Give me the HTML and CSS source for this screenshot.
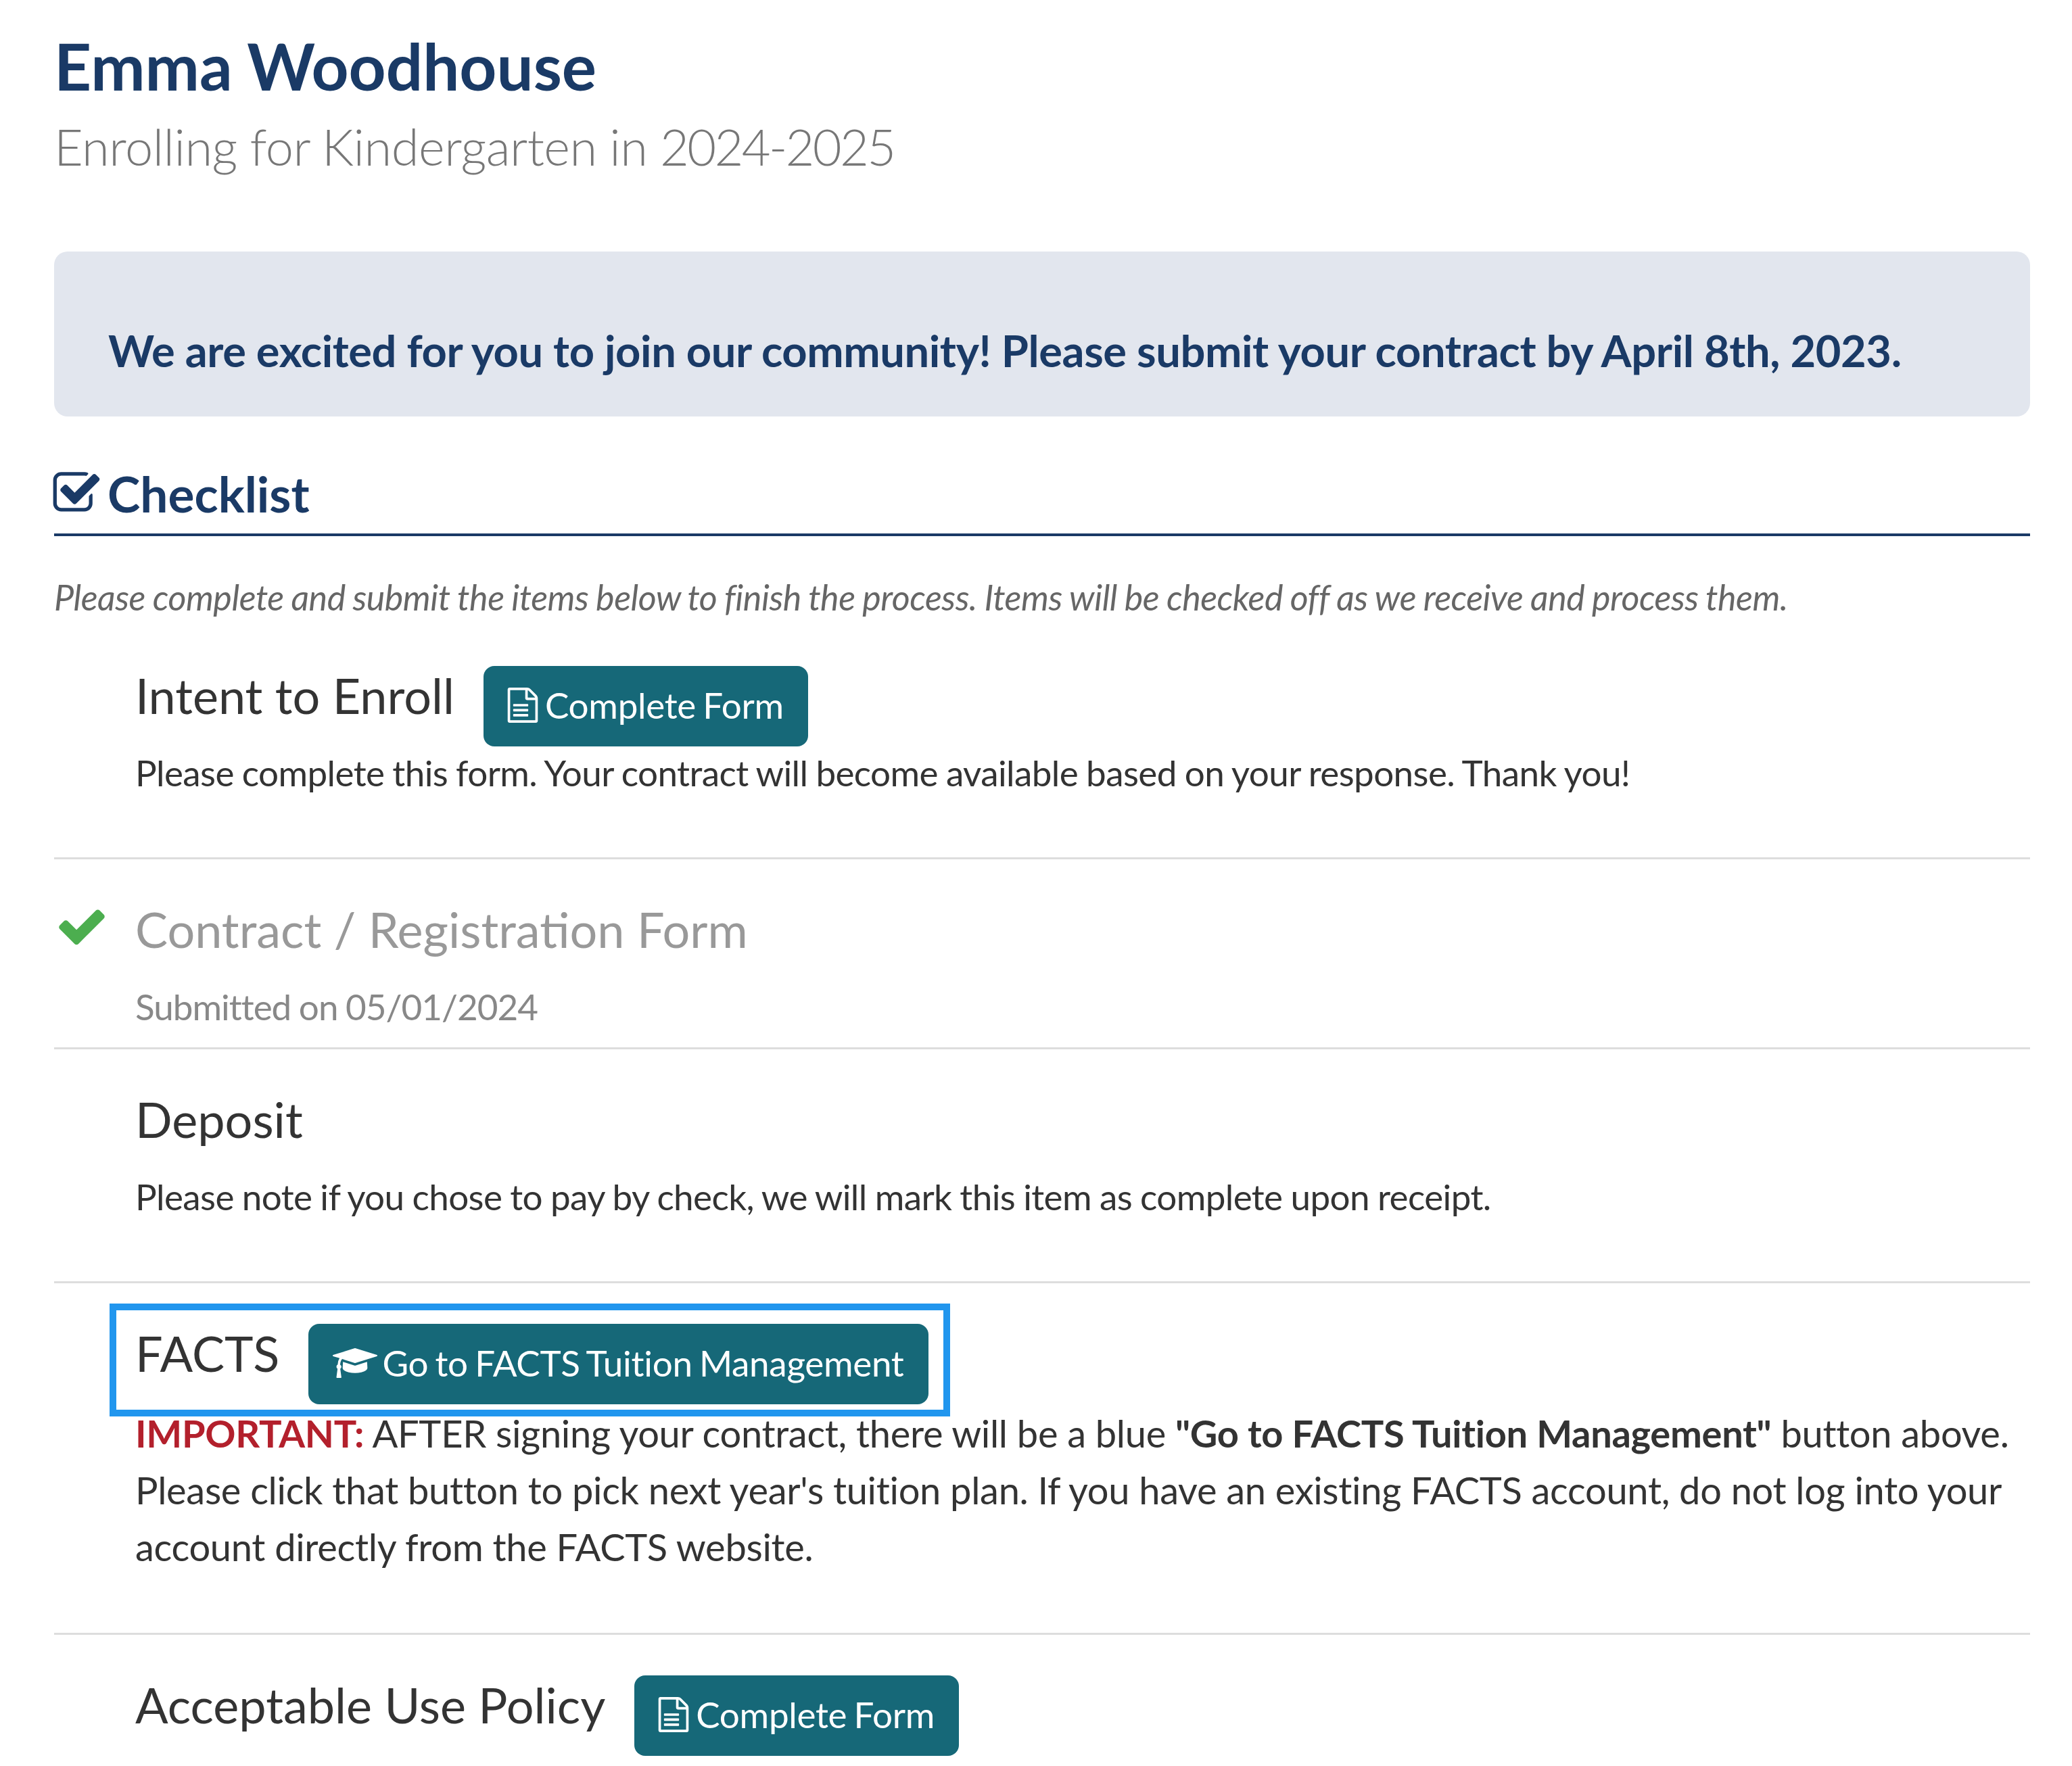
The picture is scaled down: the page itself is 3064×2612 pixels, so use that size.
FILE: index.html
```html
<!DOCTYPE html>
<html lang="en">
<head>
    <meta charset="UTF-8">
    <title>Enrollment Checklist</title>
    <link rel="stylesheet" href="styles.css">
</head>
<body>
    <h1 class="student-name">Emma Woodhouse</h1>
    <p class="student-sub">Enrolling for Kindergarten in <span class="years">2024-2025</span></p>

    <div class="banner">We are excited for you to join our community! Please submit your contract by April 8th, 2023.</div>

    <h2 class="section-title">
        <svg class="section-icon" viewBox="0 0 1792 1792"><path d="M1472 930v318q0 119-84.5 203.5t-203.5 84.5h-832q-119 0-203.5-84.5t-84.5-203.5v-832q0-119 84.5-203.5t203.5-84.5h832q63 0 117 25 15 7 18 23 3 17-9 29l-49 49q-10 10-23 10-3 0-9-2-23-6-45-6h-832q-66 0-113 47t-47 113v832q0 66 47 113t113 47h832q66 0 113-47t47-113v-254q0-13 9-22l64-64q10-10 23-10 6 0 12 3 20 8 20 29zm231-489l-814 814q-24 24-57 24t-57-24l-430-430q-24-24-24-57t24-57l110-110q24-24 57-24t57 24l263 263 647-647q24-24 57-24t57 24l110 110q24 24 24 57t-24 57z"/></svg>
        Checklist
    </h2>
    <p class="intro">Please complete and submit the items below to finish the process. Items will be checked off as we receive and process them.</p>

    <!-- Intent to Enroll -->
    <div class="item">
        <div class="item-head">
            <h3>Intent to Enroll</h3>
            <a class="btn" href="#">
                <svg class="btn-icon" viewBox="0 0 1792 1792"><path d="M1596 380q28 28 48 76t20 88v1152q0 40-28 68t-68 28h-1344q-40 0-68-28t-28-68v-1600q0-40 28-68t68-28h896q40 0 88 20t76 48zm-444-244v376h376q-10-29-22-41l-313-313q-12-12-41-22zm384 1528v-1024h-416q-40 0-68-28t-28-68v-416h-768v1536h1280zm-1128-800q0-14 9-23t23-9h704q14 0 23 9t9 23v64q0 14-9 23t-23 9h-704q-14 0-23-9t-9-23v-64zm736 224q14 0 23 9t9 23v64q0 14-9 23t-23 9h-704q-14 0-23-9t-9-23v-64q0-14 9-23t23-9h704zm0 256q14 0 23 9t9 23v64q0 14-9 23t-23 9h-704q-14 0-23-9t-9-23v-64q0-14 9-23t23-9h704z"/></svg>
                Complete Form
            </a>
        </div>
        <p class="item-text">Please complete this form. Your contract will become available based on your response. Thank you!</p>
    </div>

    <!-- Contract -->
    <div class="item done">
        <svg class="done-icon" viewBox="0 0 1792 1792"><path d="M1671 566q0 40-28 68l-724 724-136 136q-28 28-68 28t-68-28l-136-136-362-362q-28-28-28-68t28-68l136-136q28-28 68-28t68 28l294 295 656-657q28-28 68-28t68 28l136 136q28 28 28 68z"/></svg>
        <div class="item-head">
            <h3>Contract / Registration Form</h3>
        </div>
        <p class="item-text">Submitted on 05/01/2024</p>
    </div>

    <!-- Deposit -->
    <div class="item">
        <div class="item-head">
            <h3>Deposit</h3>
        </div>
        <p class="item-text">Please note if you chose to pay by check, we will mark this item as complete upon receipt.</p>
    </div>

    <!-- FACTS -->
    <div class="item">
        <div class="item-head highlighted">
            <h3>FACTS</h3>
            <a class="btn" href="#">
                <svg class="btn-icon cap" viewBox="0 0 2304 1792"><path d="M1774 836l18 316q4 69-82 128t-235 93.5-323 34.5-323-34.5-235-93.5-82-128l18-316 574 181q22 7 48 7t48-7zm530-324q0 23-22 31l-1120 352q-4 1-10 1t-10-1l-652-206q-43 34-71 111.5t-34 178.5q63 36 63 109 0 69-58 107l58 433q2 14-8 25-9 11-24 11h-192q-15 0-24-11-10-11-8-25l58-433q-58-38-58-107 0-73 65-111 11-207 98-330l-333-104q-22-8-22-31t22-31l1120-352q4-1 10-1t10 1l1120 352q22 8 22 31z"/></svg>
                Go to FACTS Tuition Management
            </a>
        </div>
        <p class="item-text large"><strong class="important">IMPORTANT:</strong> AFTER signing your contract, there will be a blue <strong>"Go to FACTS Tuition Management"</strong> button above. Please click that button to pick next year's tuition plan. If you have an existing FACTS account, do not log into your account directly from the FACTS website.</p>
    </div>

    <!-- Acceptable Use Policy -->
    <div class="item last">
        <div class="item-head">
            <h3>Acceptable Use Policy</h3>
            <a class="btn" href="#">
                <svg class="btn-icon" viewBox="0 0 1792 1792"><path d="M1596 380q28 28 48 76t20 88v1152q0 40-28 68t-68 28h-1344q-40 0-68-28t-28-68v-1600q0-40 28-68t68-28h896q40 0 88 20t76 48zm-444-244v376h376q-10-29-22-41l-313-313q-12-12-41-22zm384 1528v-1024h-416q-40 0-68-28t-28-68v-416h-768v1536h1280zm-1128-800q0-14 9-23t23-9h704q14 0 23 9t9 23v64q0 14-9 23t-23 9h-704q-14 0-23-9t-9-23v-64zm736 224q14 0 23 9t9 23v64q0 14-9 23t-23 9h-704q-14 0-23-9t-9-23v-64q0-14 9-23t23-9h704zm0 256q14 0 23 9t9 23v64q0 14-9 23t-23 9h-704q-14 0-23-9t-9-23v-64q0-14 9-23t23-9h704z"/></svg>
                Complete Form
            </a>
        </div>
    </div>
</body>
</html>
```

FILE: styles.css
```css
html, body {
    height: 2612px;
    overflow: hidden;
}

body {
    font-family: 'Lato', sans-serif;
    background-color: #fff;
    color: #333;
    margin: 0;
    padding: 0 62px 0 80px;
    font-size: 53px;
    line-height: 84px;
    letter-spacing: -0.6px;
    word-spacing: -1px;
}

.student-name {
    font-size: 96px;
    font-weight: 700;
    line-height: 110px;
    letter-spacing: 0;
    color: #1a3a66;
    margin: 42px 0 0;
}

.student-sub {
    font-size: 74px;
    font-weight: 300;
    line-height: 90px;
    letter-spacing: -0.5px;
    color: #777;
    margin: 20px 0 0;
}

.years {
    letter-spacing: -2.7px;
}

.banner {
    background-color: #e2e6ee;
    border-radius: 20px;
    color: #1a3a66;
    font-size: 65px;
    font-weight: 700;
    letter-spacing: -0.4px;
    word-spacing: 0;
    margin-top: 110px;
    padding: 104px 80px 48px;
    height: 92px;
}

.section-title {
    font-size: 73px;
    font-weight: 700;
    line-height: 84px;
    letter-spacing: 0;
    word-spacing: 0;
    color: #1a3a66;
    margin: 72px 0 0;
    padding-bottom: 17px;
    border-bottom: 4px solid #1a3a66;
    display: flex;
    align-items: center;
    gap: 9px;
}

.section-icon {
    width: 74px;
    height: 74px;
    margin-left: -4px;
    fill: #1a3a66;
}

.intro {
    font-size: 52px;
    font-style: italic;
    font-weight: 400;
    color: #666;
    letter-spacing: -0.46px;
    margin: 48px 0 0;
}

.item {
    padding: 60px 0 0 120px;
    border-bottom: 3px solid #ddd;
    position: relative;
}

.item.last {
    border-bottom: none;
}

.item-head {
    display: flex;
    align-items: flex-start;
    gap: 43px;
    position: relative;
}

.item-head h3 {
    font-size: 72px;
    font-weight: 400;
    line-height: 86px;
    letter-spacing: 0;
    word-spacing: 0;
    margin: 0 0 30px;
}

.btn {
    display: flex;
    align-items: center;
    box-sizing: border-box;
    height: 119px;
    margin-bottom: -4px;
    padding: 0 36px 3px 32px;
    background-color: #166878;
    border-radius: 16px;
    color: #fff;
    font-size: 53px;
    letter-spacing: -0.3px;
    word-spacing: -3px;
    text-decoration: none;
    gap: 7px;
}

.btn-icon {
    width: 52px;
    height: 52px;
    fill: #fff;
}

.btn-icon.cap {
    width: 66px;
    margin: 0 0 0 4px;
}

.item-text {
    margin: 0 0 83px;
}

.item-text.large {
    font-size: 56px;
    letter-spacing: -0.3px;
    word-spacing: 0;
    margin: 4px 0 85px;
}

.done .item-head h3 {
    color: #999;
}

.done .item-text {
    color: #888;
    letter-spacing: -1px;
    margin-bottom: 18px;
}

.done-icon {
    position: absolute;
    left: 2px;
    top: 60px;
    width: 78px;
    height: 78px;
    fill: #4cae4f;
}

/* callout drawn over the FACTS row */
.highlighted::after {
    content: "";
    position: absolute;
    left: -38px;
    top: -30px;
    width: 1243px;
    height: 167px;
    box-sizing: border-box;
    border: 10px solid #2196ee;
    pointer-events: none;
}

.important {
    color: #b3202c;
}
```
